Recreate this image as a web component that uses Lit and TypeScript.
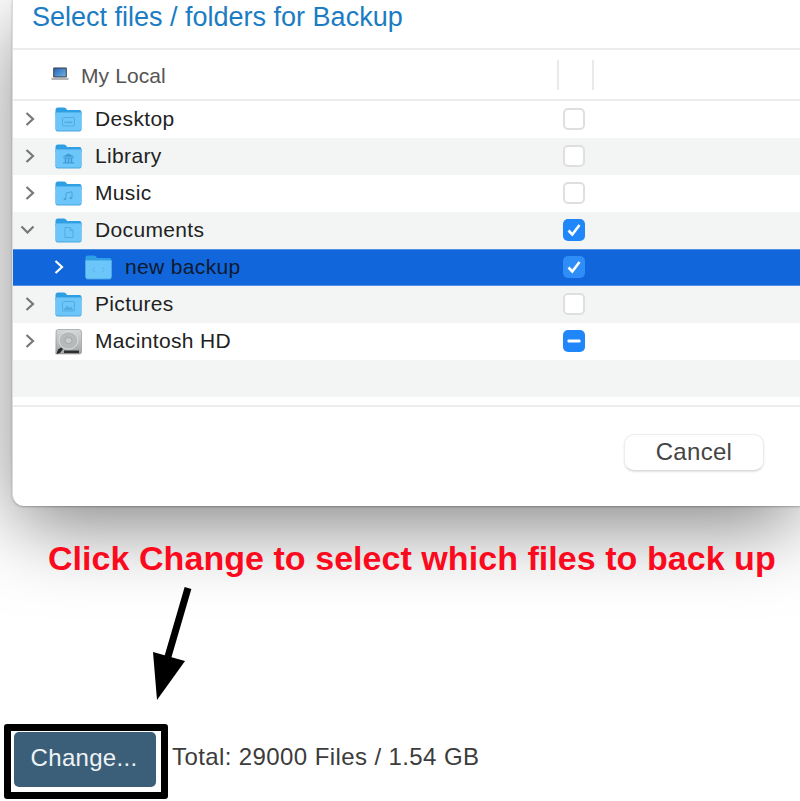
import { LitElement, html, css, svg } from "lit";
import { customElement } from "lit/decorators.js";

type Glyph = "desktop" | "library" | "music" | "doc" | "code" | "pictures";
type Row = { name: string; level: number; open?: boolean; selected?: boolean; icon: Glyph | "disk"; check: "off" | "on" | "mixed" };

const rows: Row[] = [
  { name: "Desktop", level: 0, icon: "desktop", check: "off" },
  { name: "Library", level: 0, icon: "library", check: "off" },
  { name: "Music", level: 0, icon: "music", check: "off" },
  { name: "Documents", level: 0, open: true, icon: "doc", check: "on" },
  { name: "new backup", level: 1, selected: true, icon: "code", check: "on" },
  { name: "Pictures", level: 0, icon: "pictures", check: "off" },
  { name: "Macintosh HD", level: 0, icon: "disk", check: "mixed" },
];

const glyphs: Record<Glyph, unknown> = {
  desktop: svg`<rect x="7.5" y="10.5" width="12" height="8.5" rx="1" fill="none" stroke="#52abe3" stroke-width="1"/><rect x="9.5" y="14.5" width="8" height="1.6" fill="#52abe3"/>`,
  library: svg`<path d="M13.5 9.5 L19.5 12.8 H7.5 Z M8.5 13.5h10v1h-10z M8 18.2h11v1.4H8z M9.8 14.5h1.5v3.7H9.8z M12.8 14.5h1.5v3.7h-1.5z M15.7 14.5h1.5v3.7h-1.5z" fill="#3f9bd6"/>`,
  music: svg`<path d="M11 18 V12 L17 10.8 V17" fill="none" stroke="#4aa3dc" stroke-width="1"/><circle cx="9.9" cy="18" r="1.3" fill="#4aa3dc"/><circle cx="15.9" cy="17" r="1.3" fill="#4aa3dc"/>`,
  doc: svg`<path d="M10 9.5 H15 L18 12.5 V19.5 H10 Z M15 9.5 V12.5 H18" fill="none" stroke="#52abe3" stroke-width="1"/>`,
  code: svg`<path d="M10 12 L7.5 14.5 L10 17 M17 12 L19.5 14.5 L17 17" fill="none" stroke="#5ab2e8" stroke-width="1"/>`,
  pictures: svg`<rect x="7.5" y="9.5" width="12" height="9.5" rx="1" fill="none" stroke="#52abe3" stroke-width="1"/><path d="M8.5 18 L12 13.5 L14.5 16 L16 14.5 L18.5 18 Z" fill="#52abe3"/>`,
};

const folder = (g: Glyph) => html`<svg class="ico" viewBox="0 0 27 25" width="27" height="25" aria-hidden="true">
  <path d="M0.5 3 Q0.5 0.5 3 0.5 H9 Q10.5 0.5 11.5 2 L12 3 H24.5 Q26.5 3 26.5 5 V8 H0.5 Z" fill="#2f9fe4"/>
  <path d="M0.5 5.5 H26.5 V22.5 Q26.5 24.5 24.5 24.5 H2.5 Q0.5 24.5 0.5 22.5 Z" fill="#4aa6de"/>
  <path d="M0.5 5.5 H26.5 V21.5 Q26.5 23.5 24.5 23.5 H2.5 Q0.5 23.5 0.5 21.5 Z" fill="#6cc6f9"/>
  ${svg`${glyphs[g]}`}
</svg>`;

const disk = html`<svg class="ico" viewBox="0 0 27 26" width="27" height="26" aria-hidden="true">
  <defs><linearGradient id="dk" x1="0" y1="0" x2="0" y2="1"><stop offset="0" stop-color="#d4d8d9"/><stop offset="1" stop-color="#a2a5a6"/></linearGradient></defs>
  <path d="M3 0.5 H24 Q26.5 0.5 26.5 3 V23 Q26.5 25 24.5 25 H0.8 L1 3 Q1 0.5 3 0.5 Z" fill="url(#dk)" stroke="#8a8d8e" stroke-width="0.6"/>
  <ellipse cx="13.5" cy="11.5" rx="9.5" ry="8.8" fill="#b6babb" stroke="#e4e6e6" stroke-width="0.8"/>
  <ellipse cx="13.5" cy="11.5" rx="3.5" ry="3.1" fill="#c9cccd" stroke="#9a9ea0" stroke-width="0.7"/>
  <path d="M1.5 25 L3 20.5 L6 18.5 L8 20 L5 24 Z" fill="#2a2a2a"/>
  <rect x="9" y="21.5" width="15" height="2.6" fill="#2e2e2e"/>
</svg>`;

const laptop = html`<svg viewBox="0 0 18 14" width="18" height="14" aria-hidden="true">
  <defs><linearGradient id="scr" x1="0" y1="0" x2="1" y2="1"><stop offset="0" stop-color="#2a66b8"/><stop offset="1" stop-color="#6fb0e0"/></linearGradient></defs>
  <rect x="2.2" y="0.5" width="13.6" height="10" rx="1" fill="#33373e"/>
  <rect x="3.2" y="1.5" width="11.6" height="8" fill="url(#scr)"/>
  <path d="M0.3 10.8 H17.7 V12 Q17.7 13 16.5 13 H1.5 Q0.3 13 0.3 12 Z" fill="#b2b4b6"/>
</svg>`;

@customElement("app-root")
export class AppRoot extends LitElement {
  static styles = css`
    :host {
      display: block;
      width: 800px;
      height: 801px;
      overflow: hidden;
      position: relative;
      background: #fff;
      font-family: "Liberation Sans", Arial, sans-serif;
    }
    .dialog {
      margin-left: 12px;
      height: 506px;
      box-sizing: border-box;
      background: #fff;
      border-left: 1px solid #dcdcdc;
      border-bottom-left-radius: 12px;
      box-shadow: 0 22px 80px -4px rgba(0, 0, 0, 0.5), 0 1px 2px rgba(0, 0, 0, 0.25);
      display: flex;
      flex-direction: column;
      overflow: hidden;
    }
    .title {
      height: 48px;
      box-sizing: border-box;
      padding: 2px 0 0 19px;
      font-size: 27px;
      line-height: 30px;
      color: #1b7cc3;
    }
    .head {
      height: 53px;
      box-sizing: border-box;
      border-top: 2px solid #ebeded;
      border-bottom: 2px solid #ebeded;
      display: flex;
      align-items: center;
      padding-left: 38px;
      font-size: 21px;
      color: #555;
    }
    .head svg { margin-right: 12px; margin-top: -1px; flex: none; }
    .head .label { flex: 1; letter-spacing: 0.1px; margin-top: 3px; }
    .cols {
      width: 37px;
      height: 30px;
      margin-right: 206px;
      box-sizing: border-box;
      border-left: 2px solid #e8e9e9;
      border-right: 2px solid #e8e9e9;
    }
    .row {
      height: 37px;
      box-sizing: border-box;
      display: flex;
      align-items: center;
      font-size: 21px;
      letter-spacing: 0.35px;
      color: #222;
      background: #fff;
    }
    .row:nth-child(even) { background: #f3f5f5; }
    .row.selected {
      background: #1166dc;
      color: #0e1a2c;
      border-top: 1px solid #4f8fe6;
      border-bottom: 1px solid #4f8fe6;
    }
    .chev {
      width: 42px;
      flex: none;
      display: flex;
      justify-content: flex-end;
      padding: 0 20px 2px 0;
      box-sizing: border-box;
    }
    .level1 .chev { width: 72px; padding-right: 21px; }
    .ico { flex: none; margin-right: 13px; }
    .name { flex: 1; margin-bottom: 2px; }
    .box {
      width: 22px;
      height: 22px;
      flex: none;
      margin-right: 215px;
      margin-top: -2px;
      box-sizing: border-box;
      border-radius: 5px;
      background: #fff;
      border: 2px solid #dfdfdf;
      display: flex;
      align-items: center;
      justify-content: center;
    }
    .box.on, .box.mixed { background: #1f87fa; border: 0; }
    .selected .box { background: #2f8df8; }
    .filler { height: 37px; background: #f3f5f5; flex: none; }
    .gap { height: 8px; flex: none; }
    .foot {
      flex: 1;
      border-top: 2px solid #ebeded;
      display: flex;
      justify-content: flex-end;
      align-items: flex-start;
      padding: 27px 36px 0 0;
    }
    .cancel {
      width: 140px;
      height: 37px;
      box-sizing: border-box;
      border-radius: 10px;
      border: 1px solid #ededed;
      border-bottom-color: #dcdcdc;
      background: #fff;
      box-shadow: 0 1px 2px rgba(0, 0, 0, 0.12);
      font: inherit;
      font-size: 24px;
      letter-spacing: 0.3px;
      color: #444;
      padding: 0 0 2px;
    }
    .note {
      margin: 30px 0 0 48px;
      font-size: 34px;
      letter-spacing: 0.05px;
      line-height: 44px;
      font-weight: 700;
      color: #fb0a1e;
      white-space: nowrap;
      position: relative;
    }
    .arrow { display: block; margin: 0 0 0 150px; position: relative; }
    .bottom { display: flex; align-items: center; margin: 19px 0 0 4px; position: relative; }
    .frame {
      width: 164px;
      height: 75px;
      box-sizing: border-box;
      border: 7px solid #000;
      border-radius: 3px;
      padding: 1px 0 0 3px;
      flex: none;
    }
    .change {
      display: block;
      width: 142px;
      height: 55px;
      border: 0;
      border-radius: 5px;
      background: #3b5f78;
      color: #eef3f6;
      font: inherit;
      font-size: 24px;
      letter-spacing: 0.3px;
      padding: 0 2px 4px 0;
    }
    .total { margin-left: 4px; font-size: 24px; letter-spacing: 0.4px; color: #3c3c3c; margin-bottom: 9px; }
  `;

  private chevron(r: Row) {
    const c = r.selected ? "#fff" : "#777";
    return r.open
      ? html`<svg viewBox="0 0 15 9" width="15" height="9"><path d="M1.5 1.5 L7.5 7.5 L13.5 1.5" fill="none" stroke=${c} stroke-width="2.2"/></svg>`
      : html`<svg viewBox="0 0 10 14" width="10" height="14"><path d="M1.5 1 L8 7 L1.5 13" fill="none" stroke=${c} stroke-width="2.2"/></svg>`;
  }

  private check(r: Row) {
    if (r.check === "on")
      return html`<svg viewBox="0 0 16 16" width="16" height="16"><path d="M2.5 8.5 L6.3 12.5 L13.5 3" fill="none" stroke="#fff" stroke-width="2.6"/></svg>`;
    if (r.check === "mixed")
      return html`<svg viewBox="0 0 16 16" width="16" height="16"><rect x="1.5" y="6.5" width="13" height="3" rx="1" fill="#fff"/></svg>`;
    return "";
  }

  render() {
    return html`
      <div class="dialog">
        <div class="title">Select files / folders for Backup</div>
        <div class="head">${laptop}<span class="label">My Local</span><div class="cols"></div></div>
        <div class="rows">${rows.map(
          (r) => html`<div class="row ${r.selected ? "selected" : ""} level${r.level}">
            <span class="chev">${this.chevron(r)}</span>
            ${r.icon === "disk" ? disk : folder(r.icon)}
            <span class="name">${r.name}</span>
            <span class="box ${r.check}">${this.check(r)}</span>
          </div>`
        )}</div>
        <div class="filler"></div>
        <div class="gap"></div>
        <div class="foot"><button class="cancel">Cancel</button></div>
      </div>
      <div class="note">Click Change to select which files to back up</div>
      <svg class="arrow" viewBox="0 0 50 125" width="50" height="125" aria-hidden="true">
        <path d="M38 8 L17 80" stroke="#000" stroke-width="7" fill="none"/>
        <path d="M3 72 L35 81 L7 120 Z" fill="#000"/>
      </svg>
      <div class="bottom">
        <div class="frame"><button class="change">Change...</button></div>
        <span class="total">Total: 29000 Files / 1.54 GB</span>
      </div>
    `;
  }
}
